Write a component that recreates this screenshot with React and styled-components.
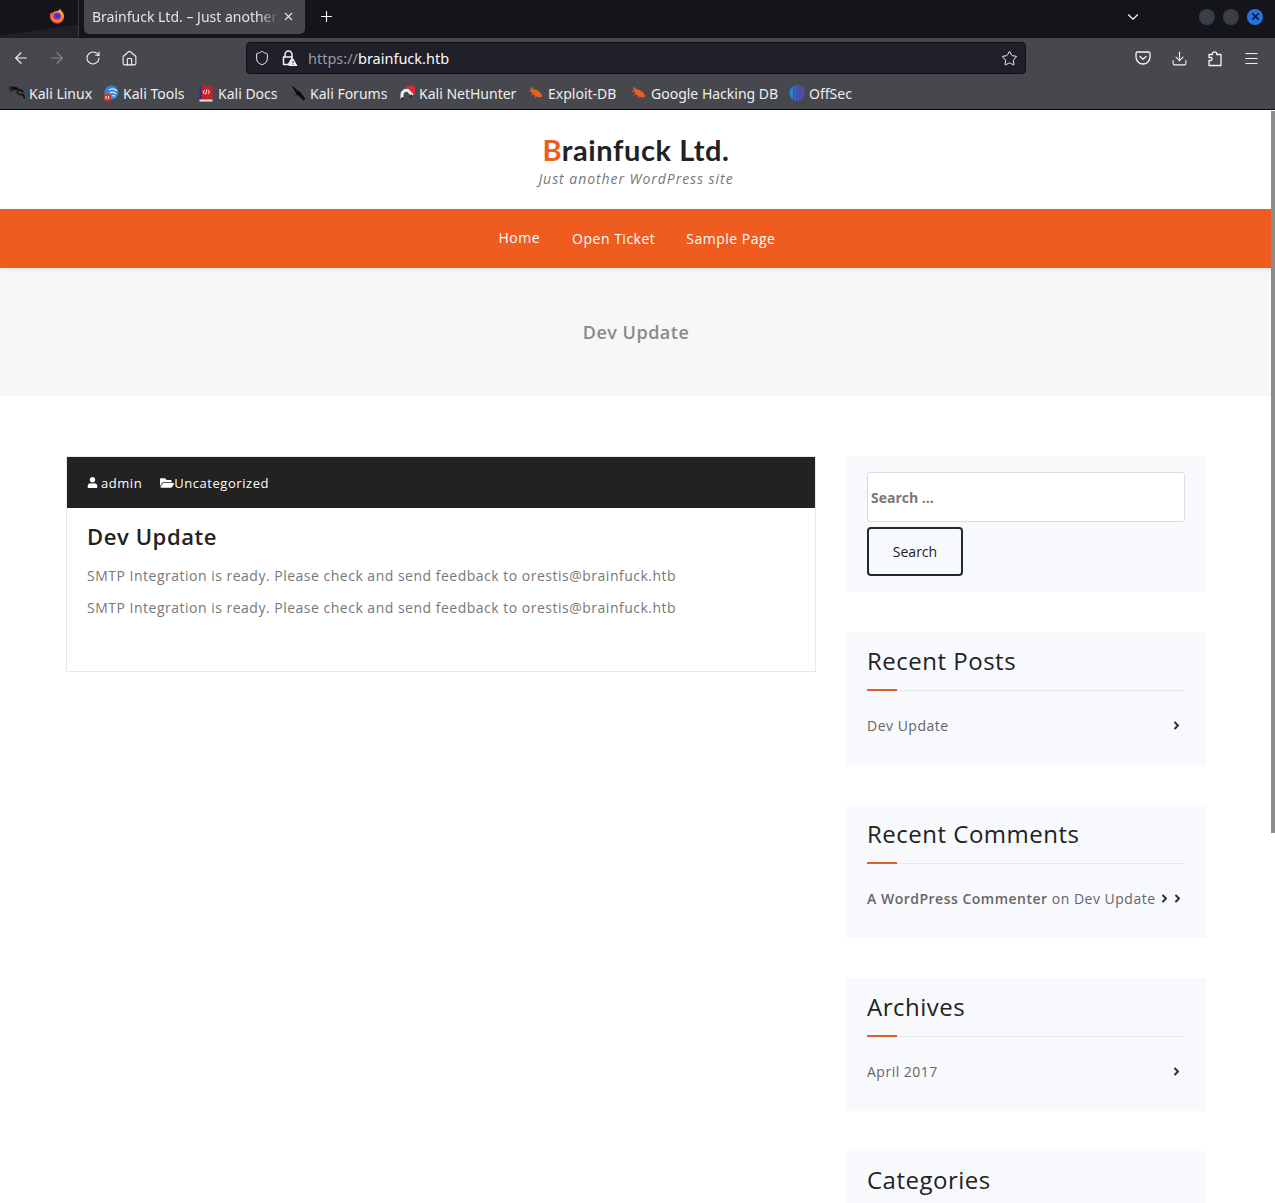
import React from 'react';
import styled, { createGlobalStyle } from 'styled-components';
import {
  ArrowLeft,
  ArrowRight,
  ChevronDown,
  Download,
  Home,
  Menu,
  Plus,
  RotateCw,
  Shield,
  Star,
  X,
} from 'lucide-react';
import { FaAngleRight, FaFolderOpen, FaUser } from 'react-icons/fa';
import { SiKalilinux } from 'react-icons/si';

const GlobalStyle = createGlobalStyle`
  html, body {
    margin: 0;
    height: 1203px;
    overflow: hidden;
    background: #fff;
  }
`;

const Shell = styled.div`
  position: relative;
  height: 1203px;
  overflow: hidden;
  display: flex;
  flex-direction: column;
  font-family: 'Open Sans', sans-serif;
`;

const TabStrip = styled.div`
  height: 38px;
  flex: none;
  display: flex;
  align-items: flex-start;
  background: linear-gradient(172deg, #14141b 0 72%, #1f1f24 73% 100%) 0 0 / 78px 38px no-repeat, #14141b;
  font-family: 'Noto Sans', sans-serif;
  color: #fbfbfe;
`;

const FirefoxSlot = styled.div`
  width: 79px;
  height: 37px;
  flex: none;
  display: flex;
  justify-content: flex-end;
  align-items: center;
  padding-right: 13px;
  box-sizing: border-box;
  border-right: 1px solid #3a3a40;
  padding-bottom: 5px;
`;

const Tab = styled.div`
  width: 221px;
  height: 34px;
  margin-left: 5px;
  flex: none;
  display: flex;
  align-items: center;
  box-sizing: border-box;
  padding: 0 10px 2px 8px;
  background: #47474d;
  border-radius: 0 0 5px 5px;
`;

const TabTitle = styled.span`
  flex: 1;
  overflow: hidden;
  white-space: nowrap;
  font-size: 14px;
  color: #e4e4e8;
  -webkit-mask-image: linear-gradient(to right, #000 88%, transparent 98%);
  mask-image: linear-gradient(to right, #000 88%, transparent 98%);
`;

const NewTab = styled.div`
  margin-left: 13px;
  height: 33px;
  display: flex;
  align-items: center;
`;

const StripEnd = styled.div`
  margin-left: auto;
  height: 33px;
  display: flex;
  align-items: center;
  padding-right: 12px;
`;

const ListAll = styled.div`
  display: flex;
  margin-right: 49px;
`;

const WindowButton = styled.div`
  width: 16px;
  height: 16px;
  margin-left: 8px;
  border-radius: 50%;
  background: ${p => (p.$close ? '#2a6fe0' : '#3b3d47')};
  display: flex;
  align-items: center;
  justify-content: center;
  color: #0c1424;
`;

const Toolbars = styled.div`
  flex: none;
  background: #47484e;
  border-bottom: 1px solid #0a0a0c;
  font-family: 'Noto Sans', sans-serif;
`;

const NavBar = styled.div`
  height: 38px;
  display: flex;
  align-items: center;
  box-sizing: border-box;
  padding: 2px 0 0 3px;
  color: #f4f4f6;
`;

const NavIcon = styled.div`
  width: 36px;
  flex: none;
  display: flex;
  justify-content: center;
  color: ${p => (p.$muted ? '#85858b' : '#f4f4f6')};
`;

const UrlBar = styled.div`
  width: 780px;
  height: 32px;
  margin-left: 99px;
  flex: none;
  display: flex;
  align-items: center;
  box-sizing: border-box;
  padding: 0 7px 0 7px;
  background: #1f2029;
  border: 1px solid #101014;
  border-radius: 4px;
  font-size: 14.5px;
`;

const LockSlot = styled.div`
  display: flex;
  margin: 0 10px 0 10px;
`;

const UrlText = styled.span`
  flex: 1;
  color: #fbfbfe;
`;

const UrlScheme = styled.span`
  color: #9a9aa2;
`;

const ToolGroup = styled.div`
  margin-left: 99px;
  display: flex;
`;

const BookmarkBar = styled.div`
  height: 33px;
  display: flex;
  align-items: center;
  padding: 1px 0 0 9px;
  box-sizing: border-box;
`;

const Bookmark = styled.div`
  display: flex;
  align-items: center;
  width: ${p => p.$w}px;
  flex: none;
  font-size: 14px;
  color: #eeeef0;
  white-space: nowrap;
`;

const BookmarkIcon = styled.span`
  width: 16px;
  height: 16px;
  margin-right: 4px;
  flex: none;
  display: flex;
  align-items: center;
  justify-content: center;
`;

const Viewport = styled.div`
  flex: 1;
  min-height: 0;
  color: #222;
`;

const SiteHeader = styled.header`
  height: 99px;
  box-sizing: border-box;
  padding: 24px 3px 0 0;
  text-align: center;
`;

const SiteTitle = styled.h1`
  margin: 0;
  font-family: 'Lato', sans-serif;
  font-size: 29px;
  line-height: 32px;
  font-weight: 700;
  letter-spacing: 0.6px;
  color: #222;
`;

const TitleInitial = styled.span`
  color: #ef5c1f;
`;

const Tagline = styled.p`
  margin: 3px 0 0;
  font-size: 14px;
  line-height: 19px;
  font-style: italic;
  letter-spacing: 0.95px;
  color: #777;
`;

const MainNav = styled.nav`
  height: 59px;
  box-sizing: border-box;
  padding-right: 1px;
  background: #ef5c1f;
  display: flex;
  justify-content: center;
  align-items: center;
  gap: 31px;
  box-shadow: 0 2px 4px rgba(0, 0, 0, 0.08);
  position: relative;
`;

const NavLink = styled.a`
  font-size: 14px;
  letter-spacing: 0.5px;
  color: #fff;
  padding-bottom: ${p => (p.$current ? '2px' : '0')};
  margin-right: ${p => (p.$current ? '1px' : '0')};
`;

const Hero = styled.div`
  height: 128px;
  padding-right: 3px;
  background: #f7f7f7;
  display: flex;
  justify-content: center;
  align-items: center;
`;

const HeroTitle = styled.h2`
  margin: 0;
  font-size: 18px;
  font-weight: 600;
  letter-spacing: 0.5px;
  color: #8a8a8a;
`;

const Content = styled.div`
  display: grid;
  grid-template-columns: 750px 360px;
  column-gap: 30px;
  align-items: start;
  padding: 60px 69px 0 66px;
`;

const Article = styled.article`
  border: 1px solid #e8e8e8;
  height: 216px;
  box-sizing: border-box;
`;

const ArticleMeta = styled.div`
  height: 51px;
  padding-left: 20px;
  background: #222;
  color: #fff;
  display: flex;
  align-items: center;
  gap: 18px;
  font-size: 13px;
  letter-spacing: 0.55px;
`;

const MetaItem = styled.span`
  display: flex;
  align-items: center;
  gap: ${p => p.$gap}px;
`;

const ArticleBody = styled.div`
  padding: 12px 20px 0;
`;

const ArticleTitle = styled.h3`
  margin: 0 0 12px;
  font-size: 22px;
  line-height: 32px;
  font-weight: 600;
  letter-spacing: 0.6px;
  color: #222;
`;

const Paragraph = styled.p`
  margin: 0 0 8px;
  font-size: 14px;
  line-height: 24px;
  letter-spacing: 0.5px;
  color: #777;
`;

const Sidebar = styled.aside`
  display: flex;
  flex-direction: column;
`;

const Widget = styled.section`
  background: #f8f9fc;
  box-sizing: border-box;
  height: ${p => p.$h}px;
  margin-bottom: ${p => p.$mb}px;
  padding: ${p => (p.$search ? '16px' : '10px')} 21px 0;
`;

const SearchInput = styled.input`
  display: block;
  width: 100%;
  height: 50px;
  box-sizing: border-box;
  padding: 0 3px;
  border: 1px solid #dcdcdc;
  border-radius: 3px;
  background: #fff;
  font-family: 'Open Sans', sans-serif;
  font-size: 14px;
  font-weight: 700;
  &::placeholder {
    color: #777;
    opacity: 1;
  }
`;

const SearchButton = styled.button`
  display: block;
  width: 96px;
  height: 49px;
  margin-top: 5px;
  border: 2px solid #222831;
  border-radius: 4px;
  background: transparent;
  color: #222;
  font-family: 'Open Sans', sans-serif;
  font-size: 14px;
`;

const WidgetTitle = styled.h4`
  margin: 0;
  position: relative;
  height: 37px;
  padding-bottom: 11px;
  font-size: 24px;
  line-height: 37px;
  font-weight: 400;
  letter-spacing: 0.5px;
  color: #222;
  border-bottom: 1px solid #e6e7ea;
  &::after {
    content: '';
    position: absolute;
    left: 0;
    bottom: -1px;
    width: 30px;
    height: 2px;
    background: #d9622b;
  }
`;

const WidgetRow = styled.div`
  display: flex;
  justify-content: space-between;
  align-items: center;
  margin-top: 24px;
  padding-right: 2px;
  font-size: 14px;
  line-height: 22px;
  letter-spacing: 0.5px;
  color: #666;
`;

const RowText = styled.span`
  display: flex;
  align-items: center;
  white-space: pre;
`;

const Author = styled.b`
  font-weight: 600;
`;

const Angle = styled(FaAngleRight)`
  color: #333;
  font-size: 13px;
  flex: none;
`;

const InlineAngle = styled(Angle)`
  margin-left: 2px;
`;

const ScrollThumb = styled.div`
  position: absolute;
  right: 0;
  top: 111px;
  width: 4px;
  height: 722px;
  background: #8c8c8c;
`;

const FirefoxLogo = () => (
  <svg width="16" height="16" viewBox="0 0 16 16">
    <defs>
      <linearGradient id="foxOuter" x1="0.8" y1="0" x2="0.2" y2="1">
        <stop offset="0" stopColor="#ffc52e" />
        <stop offset="0.5" stopColor="#ff7a2a" />
        <stop offset="1" stopColor="#f0365a" />
      </linearGradient>
    </defs>
    <path
      d="M11 .5c.2 1.500 1.300 2 2.300 3.200.9 1.100 1.700 2.600 1.700 4.500C15 12.200 11.900 15.500 8 15.500S1 12.200 1 8.300c0-1.600.5-3.100 1.300-4.200.1.800.4 1.300.9 1.700C4 3.900 6 3 8 3c1.500-.2 2.700-1.200 3-2.500z"
      fill="url(#foxOuter)"
    />
    <circle cx="8.200" cy="8.200" r="3.700" fill="#7a2fc0" />
    <circle cx="8.800" cy="7.800" r="1.700" fill="#4d2bb0" />
    <path d="M2.500 7c1 3.500 3.500 5 6 4.800 2-.2 3.300-1.300 4-2.800-.2 3-2.500 4.800-5 4.800-2.800 0-5-2.400-5-4.800z" fill="#ff8a24" />
  </svg>
);

const LockWarning = () => (
  <svg width="18" height="18" viewBox="0 0 18 18" fill="none">
    <path d="M5 8V5.500a3.500 3.500 0 0 1 7 0V8" stroke="#f4f4f6" strokeWidth="1.500" />
    <path d="M3.500 8h8.500v1.500L8.500 15.500h-5z" stroke="#f4f4f6" strokeWidth="1.500" strokeLinejoin="round" />
    <path d="M13 9l4.500 8h-9z" fill="#f4f4f6" />
    <path d="M13 12v2.300M13 15.200v.8" stroke="#2a2a30" strokeWidth="1" />
  </svg>
);

const PocketIcon = () => (
  <svg width="16" height="16" viewBox="0 0 16 16" fill="none" stroke="currentColor" strokeWidth="1.300">
    <path d="M2.500 2h11A1.500 1.500 0 0 1 15 3.500V7a7 7 0 0 1-14 0V3.500A1.500 1.500 0 0 1 2.500 2z" />
    <path d="M5 6.500l3 2.700 3-2.700" strokeLinecap="round" strokeLinejoin="round" />
  </svg>
);

const ExtensionIcon = () => (
  <svg width="16" height="17" viewBox="0 0 16 17" fill="none" stroke="currentColor" strokeWidth="1.300" strokeLinejoin="round">
    <path d="M2 15.500V10.500h2c1.500 0 1.500-3 0-3H2V4.500h3.500c-.8-3.500 5-3.500 4.200 0H14v11z" />
  </svg>
);

const ToolsIcon = () => (
  <svg width="16" height="16" viewBox="0 0 16 16" fill="none">
    <circle cx="8.500" cy="7.500" r="7" fill="#3b82d8" />
    <path d="M6 5c3-2 6-1 8 1M7 8c2-1.500 4-1 6 1M9 11c1-.6 2-.5 3 .3" stroke="#dbeafb" strokeWidth="1.100" />
    <rect x="1" y="9" width="7" height="7" rx="2" fill="#d8322a" />
    <path d="M3 11v3M5.500 11v3" stroke="#fff" strokeWidth="0.900" />
  </svg>
);

const DocsIcon = () => (
  <svg width="14" height="17" viewBox="0 0 14 17">
    <rect x="0.500" y="0.500" width="13" height="13.500" fill="#c3202b" />
    <rect x="0.500" y="0.500" width="2" height="13.500" fill="#2a2f80" />
    <rect x="0.500" y="14.500" width="13" height="2" fill="#e9e6e6" />
    <path d="M5.500 5l-1.500 2 1.500 2M9 5l1.500 2L9 9M7.800 4.500L6.700 9.500" stroke="#fff" strokeWidth="0.900" fill="none" />
  </svg>
);

const ForumsIcon = () => (
  <svg width="16" height="16" viewBox="0 0 16 16">
    <path d="M.5 1l4 1.500 3 3 2.500 1.500L15.500 14l-2 1.500-4-4-2.500-1.500-2-3.500-1.500-3z" fill="#0b0b0d" />
    <path d="M9 7l2 .5M7 9l-1.500 1" stroke="#0b0b0d" strokeWidth="1" />
  </svg>
);

const NetHunterIcon = () => (
  <svg width="16" height="16" viewBox="0 0 16 16" fill="none">
    <path d="M6 1h10v9z" fill="#d62c35" />
    <path d="M3 14V9.500A4.500 4.500 0 0 1 9 5.500l4.500 5" stroke="#eeeef0" strokeWidth="3" />
    <path d="M2 13.500h3M11 12l2-2" stroke="#1b2a4a" strokeWidth="2" />
  </svg>
);

const ExploitIcon = () => (
  <svg width="16" height="16" viewBox="0 0 16 16">
    <path d="M2 3l5 1.500c3 .8 6 3 7.500 7-3 1.200-6.500.6-8.500-1.500C4 8.500 3 6 2 3z" fill="#e8601c" />
    <path d="M5 5l-2-3M1 6l3 .5M3 10l3-2M7 13l1-3M11 13l0-2" stroke="#e8601c" strokeWidth="1" />
  </svg>
);

const OffSecIcon = () => (
  <svg width="16" height="18" viewBox="0 0 16 18">
    <defs>
      <linearGradient id="offsecFill" x1="0" y1="0" x2="1" y2="0">
        <stop offset="0" stopColor="#1f8fd6" />
        <stop offset="0.55" stopColor="#3a5fd0" />
        <stop offset="1" stopColor="#6a3ac4" />
      </linearGradient>
    </defs>
    <ellipse cx="8" cy="9" rx="7.500" ry="8" fill="url(#offsecFill)" />
    <path d="M5 1v16M8 0v18M11 1v16" stroke="#47484e" strokeWidth="0.900" />
  </svg>
);

const bookmarks = [
  { label: 'Kali Linux', w: 94, icon: <SiKalilinux size={18} color="#000" stroke="#000" strokeWidth={0.7} /> },
  { label: 'Kali Tools', w: 95, icon: <ToolsIcon /> },
  { label: 'Kali Docs', w: 92, icon: <DocsIcon /> },
  { label: 'Kali Forums', w: 109, icon: <ForumsIcon /> },
  { label: 'Kali NetHunter', w: 129, icon: <NetHunterIcon /> },
  { label: 'Exploit-DB', w: 103, icon: <ExploitIcon /> },
  { label: 'Google Hacking DB', w: 158, icon: <ExploitIcon /> },
  { label: 'OffSec', w: 70, icon: <OffSecIcon /> },
];

const BrowserChrome = () => (
  <>
    <TabStrip>
      <FirefoxSlot>
        <FirefoxLogo />
      </FirefoxSlot>
      <Tab>
        <TabTitle>Brainfuck Ltd. – Just another WordPress site</TabTitle>
        <X size={13} color="#e8e8ea" />
      </Tab>
      <NewTab>
        <Plus size={17} strokeWidth={1.6} />
      </NewTab>
      <StripEnd>
        <ListAll>
          <ChevronDown size={18} strokeWidth={1.5} />
        </ListAll>
        <WindowButton />
        <WindowButton />
        <WindowButton $close>
          <X size={11} strokeWidth={3.5} />
        </WindowButton>
      </StripEnd>
    </TabStrip>
    <Toolbars>
      <NavBar>
        <NavIcon>
          <ArrowLeft size={18} strokeWidth={1.5} />
        </NavIcon>
        <NavIcon $muted>
          <ArrowRight size={18} strokeWidth={1.5} />
        </NavIcon>
        <NavIcon>
          <RotateCw size={16} strokeWidth={1.6} />
        </NavIcon>
        <NavIcon>
          <Home size={17} strokeWidth={1.5} />
        </NavIcon>
        <UrlBar>
          <Shield size={16} strokeWidth={1.5} />
          <LockSlot>
            <LockWarning />
          </LockSlot>
          <UrlText>
            <UrlScheme>https://</UrlScheme>brainfuck.htb
          </UrlText>
          <Star size={17} strokeWidth={1.4} />
        </UrlBar>
        <ToolGroup>
          <NavIcon>
            <PocketIcon />
          </NavIcon>
          <NavIcon>
            <Download size={17} strokeWidth={1.5} />
          </NavIcon>
          <NavIcon>
            <ExtensionIcon />
          </NavIcon>
          <NavIcon>
            <Menu size={17} strokeWidth={1.4} />
          </NavIcon>
        </ToolGroup>
      </NavBar>
      <BookmarkBar>
        {bookmarks.map(b => (
          <Bookmark key={b.label} $w={b.w}>
            <BookmarkIcon>{b.icon}</BookmarkIcon>
            {b.label}
          </Bookmark>
        ))}
      </BookmarkBar>
    </Toolbars>
  </>
);

// tops in the reference step by about 173px, not on whole pixels
const widgets = [
  { title: 'Recent Posts', row: 'Dev Update' },
  { title: 'Recent Comments', comment: true },
  { title: 'Archives', row: 'April 2017' },
  { title: 'Categories' },
];

const App = () => (
  <Shell>
    <GlobalStyle />
    <BrowserChrome />
    <Viewport>
      <SiteHeader>
        <SiteTitle>
          <TitleInitial>B</TitleInitial>rainfuck Ltd.
        </SiteTitle>
        <Tagline>Just another WordPress site</Tagline>
      </SiteHeader>
      <MainNav>
        <NavLink $current>Home</NavLink>
        <NavLink>Open Ticket</NavLink>
        <NavLink>Sample Page</NavLink>
      </MainNav>
      <Hero>
        <HeroTitle>Dev Update</HeroTitle>
      </Hero>
      <Content>
        <Article>
          <ArticleMeta>
            <MetaItem $gap={3}>
              <FaUser size={11} />
              admin
            </MetaItem>
            <MetaItem $gap={0}>
              <FaFolderOpen size={14} />
              Uncategorized
            </MetaItem>
          </ArticleMeta>
          <ArticleBody>
            <ArticleTitle>Dev Update</ArticleTitle>
            <Paragraph>SMTP Integration is ready. Please check and send feedback to orestis@brainfuck.htb</Paragraph>
            <Paragraph>SMTP Integration is ready. Please check and send feedback to orestis@brainfuck.htb</Paragraph>
          </ArticleBody>
        </Article>
        <Sidebar>
          <Widget $search $h={135.7} $mb={40}>
            <SearchInput placeholder="Search ..." />
            <SearchButton>Search</SearchButton>
          </Widget>
          {widgets.map(w => (
            <Widget key={w.title} $h={133.3} $mb={39.7}>
              <WidgetTitle>{w.title}</WidgetTitle>
              {w.row && (
                <WidgetRow>
                  <RowText>{w.row}</RowText>
                  <Angle />
                </WidgetRow>
              )}
              {w.comment && (
                <WidgetRow>
                  <RowText>
                    <Author>A WordPress Commenter</Author> on Dev Update
                    <InlineAngle />
                  </RowText>
                  <Angle />
                </WidgetRow>
              )}
            </Widget>
          ))}
        </Sidebar>
      </Content>
    </Viewport>
    <ScrollThumb />
  </Shell>
);

export default App;
